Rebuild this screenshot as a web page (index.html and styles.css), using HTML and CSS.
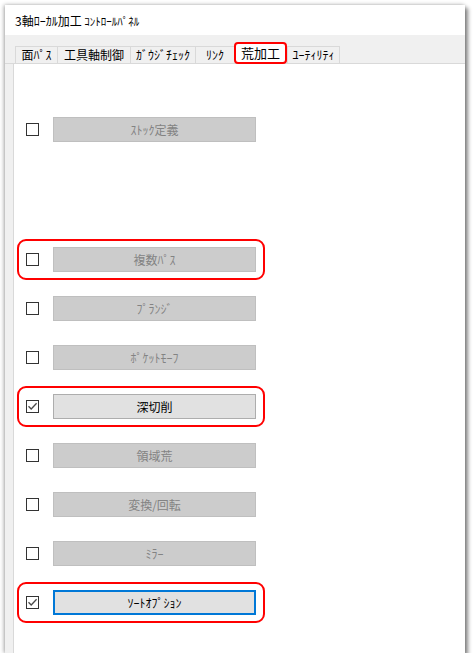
FILE: index.html
```html
<!DOCTYPE html>
<html lang="ja">
<head>
<meta charset="utf-8">
<title>3軸ﾛｰｶﾙ加工 ｺﾝﾄﾛｰﾙﾊﾟﾈﾙ</title>
<link rel="stylesheet" href="styles.css">
</head>
<body>
<div class="window">
  <div class="title">3軸ﾛｰｶﾙ加工 <span class="title-sub">ｺﾝﾄﾛｰﾙﾊﾟﾈﾙ</span></div>
  <div class="tabbar">
    <div class="tab w1">面ﾊﾟｽ</div>
    <div class="tab w2">工具軸制御</div>
    <div class="tab w3">ｶﾞｳｼﾞﾁｪｯｸ</div>
    <div class="tab w4">ﾘﾝｸ</div>
    <div class="tab tab-active w5">荒加工</div>
    <div class="tab w6">ﾕｰﾃｨﾘﾃｨ</div>
  </div>
  <div class="body">
    <div class="strip"></div>
    <div class="panel">
      <div class="row first">
        <span class="cb"></span>
        <span class="btn disabled">ｽﾄｯｸ定義</span>
      </div>
      <div class="row second marked">
        <span class="cb"></span>
        <span class="btn disabled">複数ﾊﾟｽ</span>
      </div>
      <div class="row">
        <span class="cb"></span>
        <span class="btn disabled">ﾌﾟﾗﾝｼﾞ</span>
      </div>
      <div class="row">
        <span class="cb"></span>
        <span class="btn disabled">ﾎﾟｹｯﾄﾓｰﾌ</span>
      </div>
      <div class="row marked">
        <span class="cb"><svg viewBox="0 0 11 11" width="11" height="11"><path d="M1.5 5.2 L4.2 8 L9.6 2.3" fill="none" stroke="#4a4a4a" stroke-width="1.3"/></svg></span>
        <span class="btn">深切削</span>
      </div>
      <div class="row">
        <span class="cb"></span>
        <span class="btn disabled">領域荒</span>
      </div>
      <div class="row">
        <span class="cb"></span>
        <span class="btn disabled">変換/回転</span>
      </div>
      <div class="row">
        <span class="cb"></span>
        <span class="btn disabled">ﾐﾗｰ</span>
      </div>
      <div class="row marked">
        <span class="cb"><svg viewBox="0 0 11 11" width="11" height="11"><path d="M1.5 5.2 L4.2 8 L9.6 2.3" fill="none" stroke="#4a4a4a" stroke-width="1.3"/></svg></span>
        <span class="btn focused">ｿｰﾄｵﾌﾟｼｮﾝ</span>
      </div>
    </div>
  </div>
</div>
</body>
</html>
```

FILE: styles.css
```css
* { box-sizing: border-box; }

html, body {
  margin: 0;
  padding: 0;
  background: #ffffff;
}

body {
  font-family: "Noto Sans CJK JP", "Noto Sans", sans-serif;
  font-size: 12px;
  color: #000;
  padding: 5px 0 0 5px;
}

.window {
  width: 460px;
  height: 648px;
  background: #ffffff;
  display: flex;
  flex-direction: column;
  box-shadow: -1px 0 4px rgba(0,0,0,0.35), 3px 3px 4px rgba(0,0,0,0.45);
}

.title {
  height: 30px;
  padding: 9px 0 0 10px;
  line-height: 14px;
  font-size: 12px;
  white-space: nowrap;
}

.title-sub {
  font-size: 11px;
}

.tabbar {
  height: 29px;
  background: #f0f0f0;
  border-bottom: 1px solid #d9d9d9;
  display: flex;
  align-items: flex-end;
  padding-left: 10px;
}

.tab {
  height: 17px;
  border: 1px solid #d9d9d9;
  border-bottom: none;
  border-right: none;
  background: #f0f0f0;
  text-align: center;
  line-height: 15px;
  font-size: 12px;
  white-space: nowrap;
}

.tab.w1 { width: 42px; }
.tab.w2 { width: 73px; }
.tab.w3 { width: 65px; }
.tab.w4 { width: 39px; }
.tab.w5 { width: 53px; }
.tab.w6 { width: 53px; border-right: 1px solid #d9d9d9; }

.tab-active {
  height: 22px;
  margin-bottom: -1px;
  background: #ffffff;
  border: 2px solid #ff0000;
  border-radius: 4px;
  line-height: 18px;
  font-size: 13px;
  position: relative;
  z-index: 1;
}

.body {
  flex: 1;
  display: flex;
}

.strip {
  width: 9px;
  background: #f0f0f0;
  border-right: 1px solid #d9d9d9;
}

.panel {
  flex: 1;
  background: #ffffff;
  padding-left: 3px;
  display: flex;
  flex-direction: column;
  align-items: flex-start;
}

.row {
  width: 248px;
  height: 41px;
  border: 2px solid transparent;
  border-radius: 9px;
  display: flex;
  align-items: center;
  padding-left: 7px;
  margin-top: 8px;
}

.row.first { margin-top: 45px; }
.row.second { margin-top: 89px; }

.row.marked {
  border-color: #ff0000;
}

.cb {
  width: 13px;
  height: 13px;
  border: 1px solid #333333;
  background: #ffffff;
  display: flex;
  align-items: center;
  justify-content: center;
  flex: none;
}

.cb svg { display: block; }

.btn {
  margin-left: 14px;
  width: 203px;
  height: 25px;
  border: 1px solid #adadad;
  background: #e1e1e1;
  display: flex;
  align-items: center;
  justify-content: center;
  font-size: 12px;
  color: #000;
  white-space: nowrap;
}

.btn.disabled {
  background: #cccccc;
  border-color: #bfbfbf;
  color: #838383;
}

.btn.focused {
  border: 2px solid #0078d7;
}
```
